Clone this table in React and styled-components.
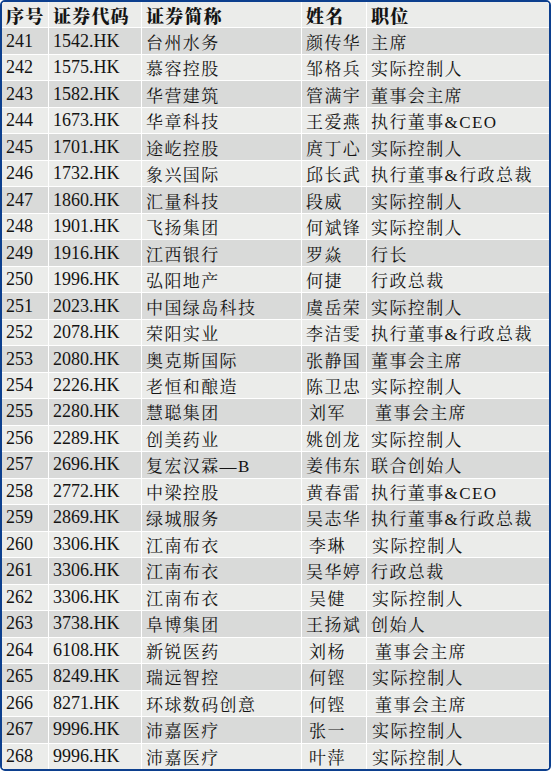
import React from "react";
import styled, { createGlobalStyle } from "styled-components";

const GlobalStyle = createGlobalStyle`
  html, body { margin: 0; padding: 0; background: #ffffff; }
  body { font-family: "Liberation Serif", "Noto Serif CJK SC", "Noto Sans CJK SC", serif; }
`;

// [no, code, short name, person, title, name indent, title indent]
const rows = [
  ["241", "1542.HK", "台州水务", "颜传华", "主席"],
  ["242", "1575.HK", "慕容控股", "邹格兵", "实际控制人"],
  ["243", "1582.HK", "华营建筑", "管满宇", "董事会主席"],
  ["244", "1673.HK", "华章科技", "王爱燕", "执行董事&CEO"],
  ["245", "1701.HK", "途屹控股", "庹丁心", "实际控制人"],
  ["246", "1732.HK", "象兴国际", "邱长武", "执行董事&行政总裁"],
  ["247", "1860.HK", "汇量科技", "段威", "实际控制人"],
  ["248", "1901.HK", "飞扬集团", "何斌锋", "实际控制人"],
  ["249", "1916.HK", "江西银行", "罗焱", "行长"],
  ["250", "1996.HK", "弘阳地产", "何捷", "行政总裁"],
  ["251", "2023.HK", "中国绿岛科技", "虞岳荣", "实际控制人"],
  ["252", "2078.HK", "荣阳实业", "李洁雯", "执行董事&行政总裁"],
  ["253", "2080.HK", "奥克斯国际", "张静国", "董事会主席"],
  ["254", "2226.HK", "老恒和酿造", "陈卫忠", "实际控制人"],
  ["255", "2280.HK", "慧聪集团", "刘军", "董事会主席", 3, 4],
  ["256", "2289.HK", "创美药业", "姚创龙", "实际控制人"],
  ["257", "2696.HK", "复宏汉霖—B", "姜伟东", "联合创始人"],
  ["258", "2772.HK", "中梁控股", "黄春雷", "执行董事&CEO"],
  ["259", "2869.HK", "绿城服务", "吴志华", "执行董事&行政总裁"],
  ["260", "3306.HK", "江南布衣", "李琳", "实际控制人", 3, 1],
  ["261", "3306.HK", "江南布衣", "吴华婷", "行政总裁"],
  ["262", "3306.HK", "江南布衣", "吴健", "实际控制人", 3, 1],
  ["263", "3738.HK", "阜博集团", "王扬斌", "创始人"],
  ["264", "6108.HK", "新锐医药", "刘杨", "董事会主席", 3, 4],
  ["265", "8249.HK", "瑞远智控", "何铿", "实际控制人", 3, 1],
  ["266", "8271.HK", "环球数码创意", "何铿", "董事会主席", 3, 4],
  ["267", "9996.HK", "沛嘉医疗", "张一", "实际控制人", 3, 1],
  ["268", "9996.HK", "沛嘉医疗", "叶萍", "实际控制人", 3, 1],
];

const header = ["序号", "证券代码", "证券简称", "姓名", "职位"];

const Frame = styled.div`
  box-sizing: border-box;
  width: 551px;
  height: 771px;
  border: 2.5px solid #0c3f8e;
  border-radius: 5px;
  overflow: hidden;
  background: #ffffff;
`;

const Grid = styled.div`
  display: grid;
  grid-template-columns: 46px 92px 159px 64px 1fr;
  grid-auto-rows: 1fr;
  column-gap: 1px;
  row-gap: 1px;
  height: 100%;
  background: #ffffff;
`;

const Cell = styled.div`
  display: flex;
  align-items: center;
  padding: 0 4px 0 ${(p) => 4 + (p.$indent || 0)}px;
  background: ${(p) => (p.$dark ? "#d9dad9" : "#ebecea")};
  color: #141414;
  font-size: ${(p) => (p.$head ? "18px" : p.$cjk ? "17px" : "18px")};
  letter-spacing: ${(p) => (p.$head ? "1.2px" : p.$cjk ? "1.4px" : "0")};
  font-weight: ${(p) => (p.$head ? 900 : 400)};
  white-space: nowrap;
  overflow: hidden;
`;

export default function App() {
  return (
    <>
      <GlobalStyle />
      <Frame>
        <Grid>
          {header.map((h) => (
            <Cell key={h} $head $cjk>
              {h}
            </Cell>
          ))}
          {rows.map((r, i) =>
            r.slice(0, 5).map((v, j) => (
              <Cell
                key={`${i}-${j}`}
                $dark={i % 2 === 0}
                $cjk={j >= 2}
                $indent={j === 3 ? r[5] : j === 4 ? r[6] : 0}
              >
                {v}
              </Cell>
            ))
          )}
        </Grid>
      </Frame>
    </>
  );
}
